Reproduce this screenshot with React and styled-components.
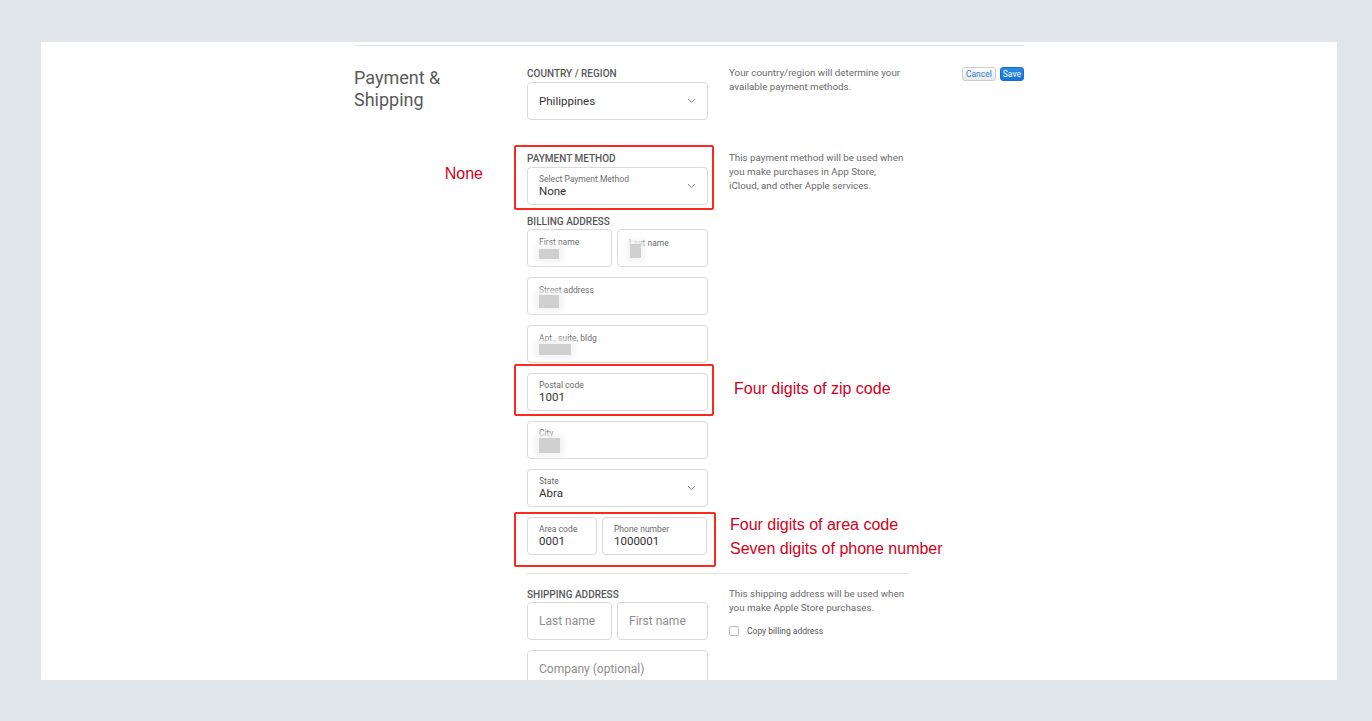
import styled, { createGlobalStyle } from 'styled-components';

const GlobalStyle = createGlobalStyle`
  html, body {
    margin: 0;
    padding: 0;
    background: #e1e6ea;
    font-family: Roboto, "Liberation Sans", Arial, sans-serif;
  }
  * { box-sizing: border-box; }
`;

const Chevron = () => (
  <svg width="9" height="6" viewBox="0 0 9 6" fill="none">
    <polyline points="1,1 4.5,4.5 8,1" stroke="#8a8a8a" strokeWidth="1" />
  </svg>
);

const Field = ({ label, value, placeholder, select, redact }) => (
  <FieldBox>
    <FieldText>
      {label && <FieldLabel>{label}</FieldLabel>}
      {value && <FieldValue>{value}</FieldValue>}
      {redact && (
        <Redacted
          style={{ width: redact.w, height: redact.h, marginTop: redact.up, marginLeft: redact.x || 0 }}
        />
      )}
      {placeholder && <Placeholder>{placeholder}</Placeholder>}
    </FieldText>
    {select && <Chevron />}
  </FieldBox>
);

const App = () => {
  return (
    <>
      <GlobalStyle />
      <Card>
        <Section>
          <Row>
            <Heading>
              Payment &amp;
              <br />
              Shipping
            </Heading>
            <Group>
              <GroupLabel>Country / Region</GroupLabel>
              <FieldBox>
                <FieldValue>Philippines</FieldValue>
                <Chevron />
              </FieldBox>
            </Group>
            <Description>
              Your country/region will determine your available payment methods.
            </Description>
            <Actions>
              <CancelButton>Cancel</CancelButton>
              <SaveButton>Save</SaveButton>
            </Actions>
          </Row>

          <Row $gap={32}>
            <span />
            <Highlight $t={-7} $r={-6} $b={-5} $l={-13}>
              <Note $left>None</Note>
              <Group>
                <GroupLabel>Payment Method</GroupLabel>
                <Field label="Select Payment Method" value="None" select />
              </Group>
            </Highlight>
            <Description>
              This payment method will be used when you make purchases in App Store,
              iCloud, and other Apple services.
            </Description>
          </Row>

          <Row $gap={10}>
            <span />
            <Group>
              <GroupLabel $tight>Billing Address</GroupLabel>
              <Stack>
                <Pair $cols="85px 91px">
                  <Field label="First name" redact={{ w: 20, h: 10, up: 2 }} />
                  <Field label="Last name" redact={{ w: 11, h: 14, up: -4, x: 1 }} />
                </Pair>
                <Field label="Street address" redact={{ w: 20, h: 13, up: 0 }} />
                <Field label="Apt., suite, bldg" redact={{ w: 32, h: 11, up: 1 }} />
                <Highlight $t={-9} $r={-6} $b={-5} $l={-13}>
                  <Field label="Postal code" value="1001" />
                  <Note $top={4} $offset={26}>Four digits of zip code</Note>
                </Highlight>
                <Field label="City" redact={{ w: 21, h: 15, up: 0 }} />
                <Field label="State" value="Abra" select />
                <Highlight $t={-5} $r={-8} $b={-12} $l={-13}>
                  <Pair $cols="70px 105px">
                    <Field label="Area code" value="0001" />
                    <Field label="Phone number" value="1000001" />
                  </Pair>
                  <Note $top={-4} $offset={22}>
                    Four digits of area code
                    <br />
                    Seven digits of phone number
                  </Note>
                </Highlight>
              </Stack>
            </Group>
          </Row>

          <Row $gap={18}>
            <span />
            <Divider />
          </Row>

          <Row $gap={14}>
            <span />
            <Group>
              <GroupLabel $tight>Shipping Address</GroupLabel>
              <Stack>
                <Pair $cols="85px 91px">
                  <Field placeholder="Last name" />
                  <Field placeholder="First name" />
                </Pair>
                <Field placeholder="Company (optional)" />
              </Stack>
            </Group>
            <Description>
              This shipping address will be used when you make Apple Store purchases.
              <CheckRow>
                <CheckBox />
                Copy billing address
              </CheckRow>
            </Description>
          </Row>
        </Section>
      </Card>
    </>
  );
};

export default App;

// Styles
const Card = styled.div`
  margin: 42px 35px 0 41px;
  height: 638px;
  background: #fff;
  overflow: hidden;
`;

const Section = styled.div`
  width: 670px;
  margin: 3px auto 0;
  padding-top: 21px;
  border-top: 1px solid #e3e3e3;
`;

const Row = styled.div`
  display: grid;
  grid-template-columns: 173px 181px 1fr auto;
  align-items: start;
  margin-top: ${({ $gap }) => ($gap ? `${$gap}px` : '0')};
`;

const Heading = styled.h2`
  margin: 0;
  font-size: 18px;
  line-height: 22px;
  font-weight: 400;
  color: #5a5a5a;
`;

const Group = styled.div`
  display: flex;
  flex-direction: column;
`;

const GroupLabel = styled.div`
  font-size: 10px;
  line-height: 12px;
  font-weight: 500;
  color: #585858;
  text-transform: uppercase;
  margin-top: 1px;
  margin-bottom: ${({ $tight }) => ($tight ? '1px' : '2px')};
`;

const Stack = styled.div`
  display: flex;
  flex-direction: column;
  gap: 10px;
`;

const Pair = styled.div`
  display: grid;
  grid-template-columns: ${({ $cols }) => $cols};
  gap: 5px;
`;

const FieldBox = styled.div`
  height: 38px;
  border: 1px solid #d9d9d9;
  border-radius: 4px;
  padding: 0 11px;
  display: flex;
  align-items: center;
  justify-content: space-between;
  background: #fff;
`;

const FieldText = styled.div`
  display: flex;
  flex-direction: column;
  align-items: flex-start;
  min-width: 0;
`;

const FieldLabel = styled.span`
  font-size: 8.5px;
  line-height: 10px;
  color: #6b6b6b;
  white-space: nowrap;
`;

const FieldValue = styled.span`
  font-size: 11.5px;
  line-height: 15px;
  color: #333;
`;

const Placeholder = styled.span`
  font-size: 12px;
  color: #8d8d8d;
`;

const Redacted = styled.span`
  display: block;
  background: #cfcfcf;
  filter: blur(0.6px);
  box-shadow: 0 0 6px 4px #f3f3f3;
`;

const Description = styled.div`
  padding-left: 21px;
  max-width: 198px;
  font-size: 9.8px;
  line-height: 14px;
  color: #6a6a6a;
  margin-top: -1px;
`;

const Actions = styled.div`
  display: flex;
  gap: 4px;
`;

const CancelButton = styled.button`
  height: 14px;
  padding: 0 3px;
  font-family: inherit;
  font-size: 8.5px;
  line-height: 12px;
  color: #2d7bd0;
  background: linear-gradient(#fdfdfd, #e9e9e9);
  border: 1px solid #cdcdcd;
  border-radius: 3px;
`;

const SaveButton = styled.button`
  height: 14px;
  padding: 0 2px;
  font-family: inherit;
  font-size: 8.5px;
  line-height: 12px;
  color: #fff;
  background: linear-gradient(#2a8ce6, #1575d6);
  border: 1px solid #1a6fc4;
  border-radius: 3px;
`;

const Highlight = styled.div`
  position: relative;

  &::before {
    content: '';
    position: absolute;
    top: ${({ $t }) => $t}px;
    right: ${({ $r }) => $r}px;
    bottom: ${({ $b }) => $b}px;
    left: ${({ $l }) => $l}px;
    border: 2px solid #fa2a20;
    border-radius: 2px;
    pointer-events: none;
  }
`;

const Note = styled.div`
  position: absolute;
  top: ${({ $top, $left }) => ($left ? 10 : $top)}px;
  ${({ $left, $offset }) =>
    $left ? 'right: calc(100% + 44px);' : `left: calc(100% + ${$offset}px);`}
  font-family: "Liberation Sans", Arial, sans-serif;
  font-size: 16px;
  line-height: 24px;
  color: #d3001a;
  white-space: nowrap;
`;

const Divider = styled.div`
  grid-column: 2 / span 2;
  width: 381px;
  height: 1px;
  background: #e3e3e3;
`;

const CheckRow = styled.label`
  display: flex;
  align-items: center;
  gap: 8px;
  margin-top: 9px;
  font-size: 8.5px;
  color: #555;
`;

const CheckBox = styled.span`
  width: 10px;
  height: 10px;
  border: 1px solid #bdbdbd;
  border-radius: 2px;
  background: #fff;
`;
